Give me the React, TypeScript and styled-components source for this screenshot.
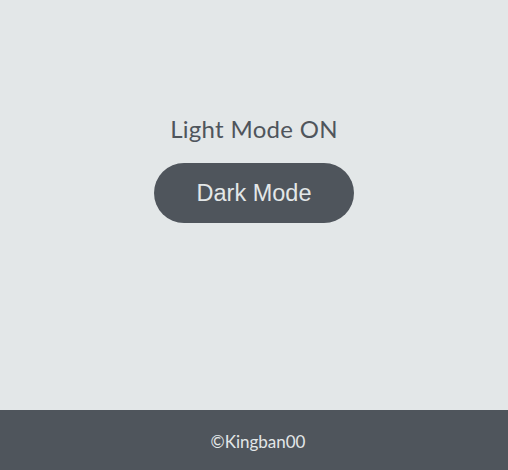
import React from "react";
import styled, { createGlobalStyle } from "styled-components";

const Global = createGlobalStyle`
  html, body { margin: 0; padding: 0; height: 100%; }
  body { background: #e3e7e8; font-family: "Lato", "Noto Sans", sans-serif; }
  #root { height: 100%; }
`;

const Page = styled.div`
  height: 470px;
  display: flex;
  flex-direction: column;
  background: #e3e7e8;
`;

const Main = styled.main`
  flex: 1;
  display: flex;
  flex-direction: column;
  align-items: center;
  padding-top: 114px;
  gap: 19px;
`;

const Status = styled.h1`
  margin: 0;
  font-family: "Lato", "Noto Sans", sans-serif;
  font-weight: 400;
  font-size: 24px;
  line-height: 30px;
  color: #4f555c;
  letter-spacing: 0.3px;
`;

const Toggle = styled.button`
  width: 200px;
  height: 60px;
  border: none;
  border-radius: 30px;
  background: #4f555c;
  color: #e3e7e8;
  font-family: "Liberation Sans", Arial, sans-serif;
  font-size: 23.5px;
  cursor: pointer;
`;

const Footer = styled.footer`
  height: 60px;
  background: #4f555c;
  color: #e3e7e8;
  display: flex;
  align-items: center;
  justify-content: center;
  font-family: "Lato", "Noto Sans", sans-serif;
  font-size: 17px;
  padding: 2px 0 0 8px;
  box-sizing: border-box;
`;

export default function App() {
  return (
    <Page>
      <Global />
      <Main>
        <Status>Light Mode ON</Status>
        <Toggle>Dark Mode</Toggle>
      </Main>
      <Footer>©Kingban00</Footer>
    </Page>
  );
}
